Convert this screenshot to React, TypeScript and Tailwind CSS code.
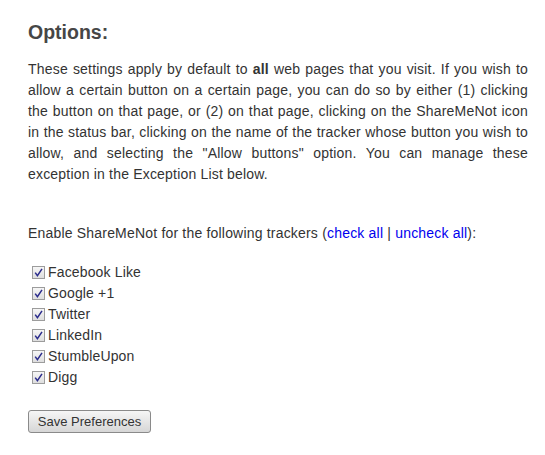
import React from "react";

const trackers = ["Facebook Like", "Google +1", "Twitter", "LinkedIn", "StumbleUpon", "Digg"];

function Check() {
  return (
    <span className="ml-[4px] mr-[3px] inline-flex h-[13px] w-[13px] shrink-0 items-center justify-center border border-[#9c9c9c] bg-gradient-to-b from-[#f6f6f6] to-[#dedede]">
      <svg width="9" height="9" viewBox="0 0 9 9">
        <path d="M1.2 4.6 L3.4 7.6 L8 0.8" fill="none" stroke="#2b2c8c" strokeWidth="1.5" />
      </svg>
    </span>
  );
}

export default function App() {
  return (
    <div className="min-h-[455px] w-[545px] bg-white text-[#333] font-['Liberation_Sans',Arial,sans-serif]">
      <div className="w-[500px] pl-[28px] pt-[20px] box-content">
        <h1 className="text-[19.5px] font-bold leading-[24px] text-[#464646]">Options:</h1>
        <p className="mt-[15px] text-justify text-[14px] leading-[21px] tracking-[0.19px]">
          These settings apply by default to <b>all</b> web pages that you visit. If you wish to allow a certain button on a certain page, you can do so by either (1) clicking the button on that page, or (2) on that page, clicking on the ShareMeNot icon in the status bar, clicking on the name of the tracker whose button you wish to allow, and selecting the "Allow buttons" option. You can manage these exception in the Exception List below.
        </p>
        <p className="mt-[38px] text-[14px] leading-[21px] tracking-[0.19px]">
          Enable ShareMeNot for the following trackers (
          <a className="text-[#0000ee]">check all</a> | <a className="text-[#0000ee]">uncheck all</a>):
        </p>
        <div className="mt-[18px] flex flex-col">
          {trackers.map((t) => (
            <label key={t} className="flex h-[21px] items-center text-[14px] tracking-[0.15px]">
              <Check />
              <span>{t}</span>
            </label>
          ))}
        </div>
        <button className="mt-[22px] h-[23px] w-[123px] rounded-[3px] border border-[#8a8a8a] bg-gradient-to-b from-[#f6f6f6] to-[#d6d6d6] text-[13px] text-[#333]">
          Save Preferences
        </button>
      </div>
    </div>
  );
}
